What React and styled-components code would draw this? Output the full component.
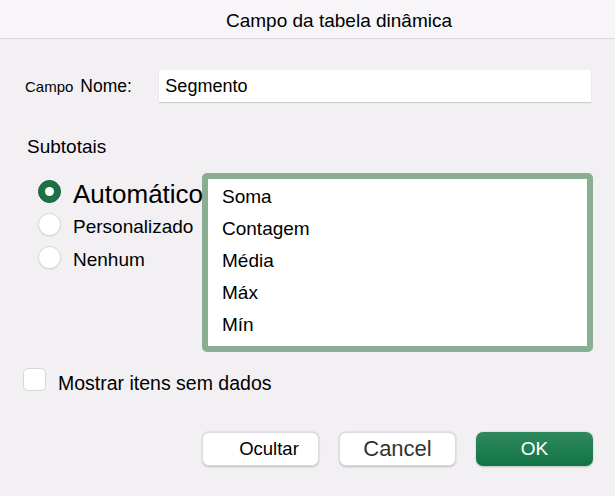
import styled, { createGlobalStyle } from "styled-components";

const GlobalStyle = createGlobalStyle`
  html, body {
    margin: 0;
    padding: 0;
    background: #f2f0f3;
  }
  body {
    font-family: "Liberation Sans", Arial, sans-serif;
    color: #000;
  }
`;

const Dialog = styled.div`
  width: 615px;
  height: 496px;
  display: flex;
  flex-direction: column;
  background: #f2f0f3;
  overflow: hidden;
`;

const TitleBar = styled.div`
  height: 35px;
  padding: 3px 0 0 63px;
  line-height: 35px;
  text-align: center;
  font-size: 19px;
  background: #f7f5f8;
  border-bottom: 1px solid #dcdadd;
`;

const Content = styled.div`
  display: flex;
  flex-direction: column;
  padding: 0 22px 0 25px;
`;

const NameRow = styled.div`
  display: flex;
  align-items: center;
  margin-top: 31px;
  height: 32px;
`;

const SmallLabel = styled.span`
  font-size: 15px;
  margin-right: 7px;
`;

const NameLabel = styled.span`
  font-size: 17.5px;
  width: 79px;
`;

const TextInput = styled.input`
  box-sizing: border-box;
  width: 432px;
  height: 32px;
  border: none;
  outline: none;
  padding: 0 6px;
  background: #fff;
  font-family: inherit;
  font-size: 18px;
  color: #000;
  box-shadow: 0 1px 1px rgba(0, 0, 0, 0.15);
`;

const SectionTitle = styled.div`
  font-size: 19px;
  margin: 34px 0 0 2px;
`;

const Options = styled.div`
  display: flex;
  align-items: flex-start;
  margin-top: 15px;
  margin-left: 13px;
`;

const RadioColumn = styled.div`
  width: 164px;
  padding-top: 2px;
  position: relative;
  z-index: 1;
`;

const RadioRow = styled.label`
  display: flex;
  align-items: center;
  height: 33px;
  white-space: nowrap;
`;

const RadioDot = styled.span`
  flex: none;
  box-sizing: border-box;
  width: 23px;
  height: 23px;
  border-radius: 50%;
  margin-right: 12px;
  display: flex;
  align-items: center;
  justify-content: center;
  background: ${(p) => (p.$checked ? "#1e7145" : "#fff")};
  border: 1px solid ${(p) => (p.$checked ? "#17613a" : "#dad8db")};
  box-shadow: ${(p) => (p.$checked ? "none" : "0 0.5px 1px rgba(0,0,0,0.1)")};

  &::after {
    content: "";
    display: ${(p) => (p.$checked ? "block" : "none")};
    width: 9px;
    height: 9px;
    border-radius: 50%;
    background: #fff;
  }
`;

const RadioText = styled.span`
  font-size: ${(p) => (p.$big ? "26px" : "19px")};
  padding-top: 5px;
`;

const ListBox = styled.div`
  box-sizing: border-box;
  width: 395px;
  height: 179px;
  border: 6px solid #8aae93;
  border-radius: 5px;
  background: #fff;
  padding: 2px 0 0 14px;
`;

const ListItem = styled.div`
  font-size: 19px;
  line-height: 32px;
`;

const CheckRow = styled.label`
  display: flex;
  align-items: center;
  height: 23px;
  margin-top: 16px;
  margin-left: -2px;
`;

const CheckBox = styled.span`
  flex: none;
  box-sizing: border-box;
  width: 23px;
  height: 23px;
  border-radius: 5px;
  background: #fff;
  border: 1px solid #d8d6d9;
  margin-right: 12px;
`;

const CheckText = styled.span`
  font-size: 19.5px;
  padding-top: 7px;
`;

const ButtonBar = styled.div`
  display: flex;
  justify-content: flex-end;
  gap: 20px;
  margin-top: 41px;
`;

const Button = styled.button`
  box-sizing: border-box;
  width: 117px;
  height: 34px;
  border-radius: 7px;
  font-family: inherit;
  font-size: ${(p) => p.$size || "19px"};
  padding: 0 0 0 ${(p) => p.$shift || "0px"};
  border: ${(p) => (p.$primary ? "none" : "0.5px solid #dddbde")};
  color: ${(p) => (p.$primary ? "#fff" : p.$muted ? "#333" : "#000")};
  background: ${(p) =>
    p.$primary ? "linear-gradient(#30895e, #117445)" : "#fff"};
  box-shadow: 0 0.5px 2px rgba(0, 0, 0, 0.22);
`;

export default function App() {
  return (
    <>
      <GlobalStyle />
      <Dialog>
        <TitleBar>Campo da tabela dinâmica</TitleBar>
        <Content>
          <NameRow>
            <SmallLabel>Campo</SmallLabel>
            <NameLabel>Nome:</NameLabel>
            <TextInput defaultValue="Segmento" />
          </NameRow>

          <SectionTitle>Subtotais</SectionTitle>

          <Options>
            <RadioColumn>
              <RadioRow>
                <RadioDot $checked />
                <RadioText $big>Automático</RadioText>
              </RadioRow>
              <RadioRow>
                <RadioDot />
                <RadioText>Personalizado</RadioText>
              </RadioRow>
              <RadioRow>
                <RadioDot />
                <RadioText>Nenhum</RadioText>
              </RadioRow>
            </RadioColumn>
            <ListBox>
              <ListItem>Soma</ListItem>
              <ListItem>Contagem</ListItem>
              <ListItem>Média</ListItem>
              <ListItem>Máx</ListItem>
              <ListItem>Mín</ListItem>
            </ListBox>
          </Options>

          <CheckRow>
            <CheckBox />
            <CheckText>Mostrar itens sem dados</CheckText>
          </CheckRow>

          <ButtonBar>
            <Button $size="18.5px" $shift="17px">Ocultar</Button>
            <Button $size="22px" $muted>Cancel</Button>
            <Button $primary>OK</Button>
          </ButtonBar>
        </Content>
      </Dialog>
    </>
  );
}
